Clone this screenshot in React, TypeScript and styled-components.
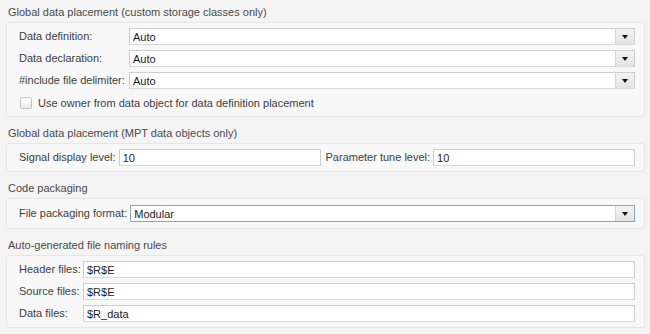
import { createGlobalStyle, styled } from 'styled-components';

const GlobalStyle = createGlobalStyle`
  html, body {
    margin: 0;
    padding: 0;
    background: #f4f4f4;
  }
  body {
    font-family: "Liberation Sans", Arial, sans-serif;
    font-size: 11px;
    color: #3c3c3c;
  }
`;

const Page = styled.div`
  width: 650px;
  height: 334px;
  display: flex;
  flex-direction: column;
  gap: 4px;
  overflow: hidden;
`;

const Section = styled.section`
  display: flex;
  flex-direction: column;
`;

const SectionTitle = styled.div`
  padding: 5px 8px 3px;
  height: 14px;
  line-height: 14px;
  color: #4a4a4a;
  font-size: 11px;
`;

const Panel = styled.div<{ $pad?: number }>`
  margin: 0 5px 0 6px;
  padding: ${(p) => p.$pad ?? 5}px 9px ${(p) => p.$pad ?? 5}px 12px;
  background: #f8f8f8;
  border: 1px solid #e6e6e6;
  border-radius: 3px;
  display: flex;
  flex-direction: column;
  gap: 5px;
`;

const FormGrid = styled.div<{ $labelWidth: number }>`
  display: grid;
  grid-template-columns: ${(p) => p.$labelWidth}px 1fr;
  row-gap: 5px;
  align-items: center;
`;

const FormRow = styled.div`
  display: flex;
  align-items: center;
  gap: 3px;
`;

const Label = styled.span`
  white-space: nowrap;
  color: #3e3e3e;
  line-height: 17px;
`;

const RowLabel = styled(Label)`
  margin-left: 2px;
`;

const Field = styled.div<{ $focused?: boolean; $height?: number }>`
  flex: 1;
  display: flex;
  align-items: stretch;
  height: ${(p) => p.$height ?? 17}px;
  box-sizing: border-box;
  background: #ffffff;
  border: 1px solid ${(p) => (p.$focused ? '#8fa3c4' : '#cdcdcd')};
  border-bottom-color: ${(p) => (p.$focused ? '#8fa3c4' : '#d9d9d9')};
  min-width: 0;
`;

const FieldText = styled.span`
  flex: 1;
  padding-left: 3px;
  display: flex;
  align-items: center;
  color: #1e1e1e;
  white-space: nowrap;
`;

const ArrowButton = styled.span`
  width: 18px;
  display: flex;
  align-items: center;
  justify-content: center;
  border-left: 1px solid #d4d4d4;
  background: linear-gradient(#f3f3f3, #e4e4e4);
`;

const Triangle = styled.span`
  width: 0;
  height: 0;
  border-left: 3.5px solid transparent;
  border-right: 3.5px solid transparent;
  border-top: 4px solid #111;
  margin-top: 1px;
`;

const CheckRow = styled.label`
  display: flex;
  align-items: center;
  gap: 6px;
  height: 17px;
  padding-left: 1px;
  color: #3e3e3e;
`;

const CheckBox = styled.span`
  width: 12px;
  height: 12px;
  box-sizing: border-box;
  border: 1px solid #c4c4c4;
  border-radius: 2px;
  background: linear-gradient(#fdfdfd, #ececec);
`;

const Dropdown = ({ value, focused, height }: { value: string; focused?: boolean; height?: number }) => (
  <Field $focused={focused} $height={height}>
    <FieldText>{value}</FieldText>
    <ArrowButton>
      <Triangle />
    </ArrowButton>
  </Field>
);

const TextField = ({ value }: { value: string }) => (
  <Field>
    <FieldText>{value}</FieldText>
  </Field>
);

export default function App() {
  return (
    <Page>
      <GlobalStyle />
      <Section>
        <SectionTitle>Global data placement (custom storage classes only)</SectionTitle>
        <Panel>
          <FormGrid $labelWidth={110}>
            <Label>Data definition:</Label>
            <Dropdown value="Auto" />
            <Label>Data declaration:</Label>
            <Dropdown value="Auto" />
            <Label>#include file delimiter:</Label>
            <Dropdown value="Auto" />
          </FormGrid>
          <CheckRow>
            <CheckBox />
            Use owner from data object for data definition placement
          </CheckRow>
        </Panel>
      </Section>

      <Section>
        <SectionTitle>Global data placement (MPT data objects only)</SectionTitle>
        <Panel $pad={5}>
          <FormRow>
            <Label>Signal display level:</Label>
            <Field $height={17}>
              <FieldText>10</FieldText>
            </Field>
            <RowLabel>Parameter tune level:</RowLabel>
            <Field $height={17}>
              <FieldText>10</FieldText>
            </Field>
          </FormRow>
        </Panel>
      </Section>

      <Section>
        <SectionTitle>Code packaging</SectionTitle>
        <Panel $pad={6}>
          <FormRow>
            <Label>File packaging format:</Label>
            <Dropdown value="Modular" focused height={17} />
          </FormRow>
        </Panel>
      </Section>

      <Section>
        <SectionTitle>Auto-generated file naming rules</SectionTitle>
        <Panel>
          <FormGrid $labelWidth={64}>
            <Label>Header files:</Label>
            <TextField value="$R$E" />
            <Label>Source files:</Label>
            <TextField value="$R$E" />
            <Label>Data files:</Label>
            <TextField value="$R_data" />
          </FormGrid>
        </Panel>
      </Section>
    </Page>
  );
}
